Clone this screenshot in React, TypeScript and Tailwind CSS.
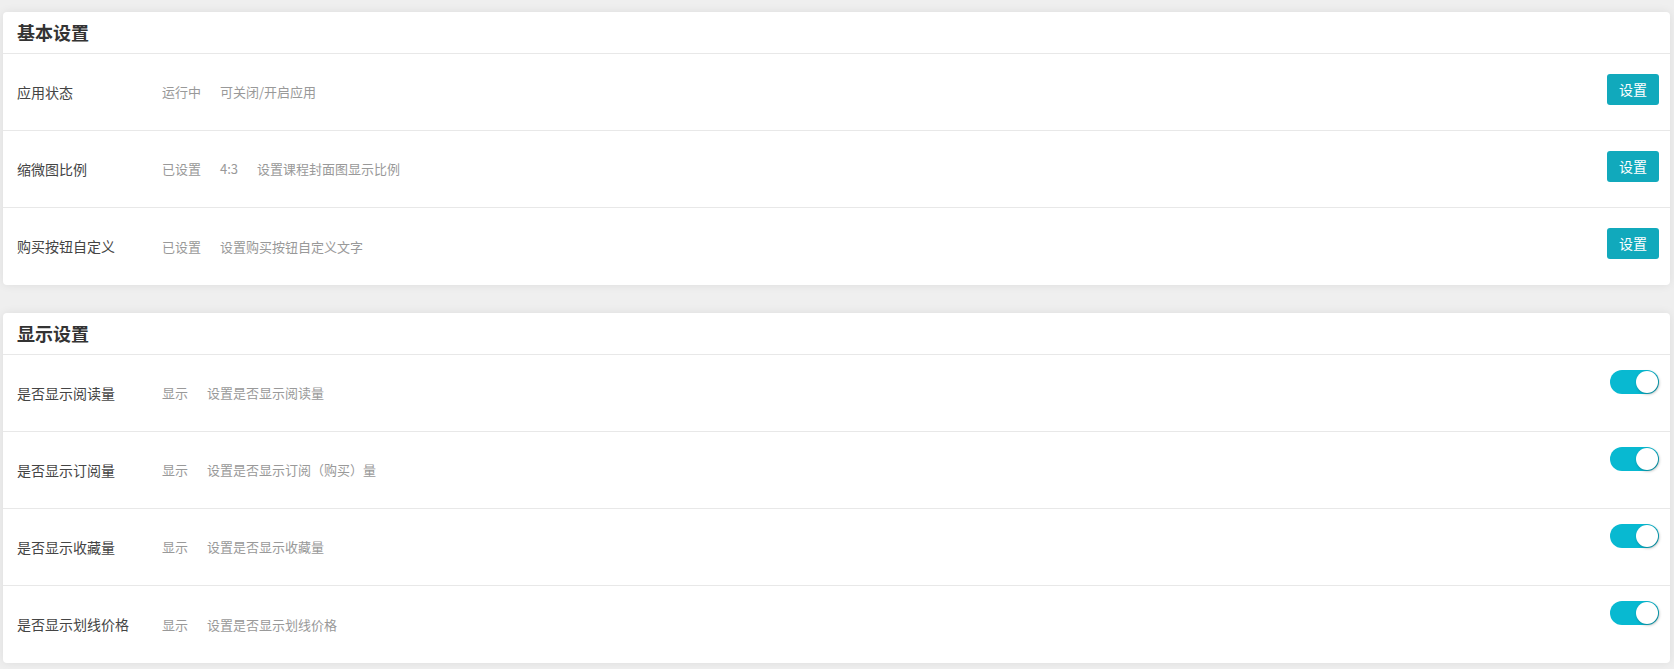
import React from 'react';

type Row = { label: string; values: string[]; control: 'button' | 'toggle' };

const basic: Row[] = [
  { label: '应用状态', values: ['运行中', '可关闭/开启应用'], control: 'button' },
  { label: '缩微图比例', values: ['已设置', '4:3', '设置课程封面图显示比例'], control: 'button' },
  { label: '购买按钮自定义', values: ['已设置', '设置购买按钮自定义文字'], control: 'button' },
];

const display: Row[] = [
  { label: '是否显示阅读量', values: ['显示', '设置是否显示阅读量'], control: 'toggle' },
  { label: '是否显示订阅量', values: ['显示', '设置是否显示订阅（购买）量'], control: 'toggle' },
  { label: '是否显示收藏量', values: ['显示', '设置是否显示收藏量'], control: 'toggle' },
  { label: '是否显示划线价格', values: ['显示', '设置是否显示划线价格'], control: 'toggle' },
];

function Toggle() {
  return (
    <div className="relative w-[49px] h-[24px] rounded-full bg-[#08b9d1] mt-[15px]">
      <div className="absolute right-[1px] top-[1px] w-[22px] h-[22px] rounded-full bg-white shadow-[1px_1px_3px_rgba(0,0,0,0.35)]"></div>
    </div>
  );
}

function Card({ title, rows }: { title: string; rows: Row[] }) {
  return (
    <div className="bg-white rounded-[4px] shadow-[0_0_10px_rgba(0,0,0,0.08)]">
      <div className="h-[42px] border-b border-[#e8e8e8] px-[14px] flex items-center">
        <h2 className="text-[18px] font-bold text-[#333]">{title}</h2>
      </div>
      {rows.map((row, i) => (
        <div
          key={row.label}
          className={`h-[77px] px-[14px] flex items-start ${i < rows.length - 1 ? 'border-b border-[#e8e8e8]' : ''}`}
        >
          <div className="self-center w-[145px] text-[14px] text-[#444]">{row.label}</div>
          <div className="self-center flex gap-[19px] text-[13px] text-[#999]">
            {row.values.map((v) => (
              <span key={v}>{v}</span>
            ))}
          </div>
          <div className="ml-auto mr-[-3px]">
            {row.control === 'button' ? (
              <button className="mt-[20px] w-[52px] h-[31px] rounded-[3px] bg-[#11a9bc] text-white text-[14px]">
                设置
              </button>
            ) : (
              <Toggle />
            )}
          </div>
        </div>
      ))}
    </div>
  );
}

export default function App() {
  return (
    <div
      className="min-h-[669px] bg-[#efefef] pt-[12px] pl-[3px] pr-[4px]"
      style={{ fontFamily: '"Noto Sans CJK SC", "Noto Sans", sans-serif' }}
    >
      <div className="mb-[28px]">
        <Card title="基本设置" rows={basic} />
      </div>
      <Card title="显示设置" rows={display} />
    </div>
  );
}
